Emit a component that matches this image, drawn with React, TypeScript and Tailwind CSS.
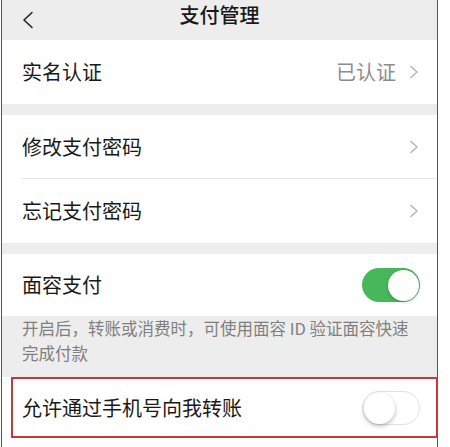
import React from "react";

const font = { fontFamily: '"Noto Sans CJK SC", "Noto Sans", sans-serif' };

function Chevron() {
  return (
    <svg width="10" height="14" viewBox="0 0 10 14" className="shrink-0">
      <polyline points="2,1.5 8,7 2,12.5" fill="none" stroke="#b3b3b3" strokeWidth="1.4" strokeLinecap="round" strokeLinejoin="round" />
    </svg>
  );
}

function Toggle({ on }: { on: boolean }) {
  return on ? (
    <div className="w-[58px] h-[34px] rounded-full bg-[#47b75b] flex items-center justify-end p-[1.5px]">
      <div className="w-[31px] h-[31px] rounded-full bg-white shadow-[0_1px_3px_rgba(0,0,0,0.25)]" />
    </div>
  ) : (
    <div className="w-[58px] h-[34px] rounded-full bg-white border border-[#e2e2e2] flex items-center justify-start p-px">
      <div className="w-[31px] h-[31px] rounded-full bg-white shadow-[0_2px_4px_rgba(0,0,0,0.28)]" />
    </div>
  );
}

export default function App() {
  return (
    <div className="w-[450px] h-[447px] bg-white overflow-hidden" style={font}>
      <div className="relative w-[437px] h-full ml-px border-l border-r border-[#555] bg-[#ededed] flex flex-col">
        {/* nav */}
        <div className="h-[40px] shrink-0 grid grid-cols-[1fr_auto_1fr] items-center">
          <div className="pl-[19px] flex items-center">
            <svg width="14" height="18" viewBox="0 0 14 18">
              <polyline points="11,1.5 3,9 11,16.5" fill="none" stroke="#222" strokeWidth="1.6" strokeLinecap="round" strokeLinejoin="round" />
            </svg>
          </div>
          <div className="text-[20px] font-medium text-[#191919] leading-none -mt-[10px]">支付管理</div>
          <div />
        </div>

        {/* row 1 */}
        <div className="h-[64px] shrink-0 bg-white flex items-center pl-[20px] pr-[18px]">
          <span className="text-[20px] text-[#191919] flex-1">实名认证</span>
          <span className="text-[20px] text-[#8c8c8c] mr-[13px]">已认证</span>
          <Chevron />
        </div>

        <div className="h-[11px] shrink-0" />

        <div className="shrink-0 bg-white">
          <div className="h-[63px] flex items-center pl-[20px] pr-[18px]">
            <span className="text-[20px] text-[#191919] flex-1">修改支付密码</span>
            <Chevron />
          </div>
          <div className="ml-[20px] h-px bg-[#e6e6e6]" />
          <div className="h-[64px] flex items-center pl-[20px] pr-[18px]">
            <span className="text-[20px] text-[#191919] flex-1">忘记支付密码</span>
            <Chevron />
          </div>
        </div>

        <div className="h-[11px] shrink-0" />

        <div className="h-[62px] shrink-0 bg-white flex items-center pl-[20px] pr-[17px]">
          <span className="text-[20px] text-[#191919] flex-1">面容支付</span>
          <Toggle on />
        </div>

        <div className="h-[61px] shrink-0 pl-[20px] pr-[20px] text-[16.5px] leading-[24.5px] text-[#7f7f7f]">
          开启后，转账或消费时，可使用面容 ID 验证面容快速完成付款
        </div>

        <div className="flex-1 bg-white">
          <div className="h-[62px] flex items-center pl-[20px] pr-[17px]">
            <span className="text-[20px] text-[#191919] flex-1">允许通过手机号向我转账</span>
            <Toggle on={false} />
          </div>
        </div>

        <div className="absolute left-[9px] top-[377px] w-[427px] h-[61px] border-2 border-[#c9373a] pointer-events-none" />
      </div>
    </div>
  );
}
